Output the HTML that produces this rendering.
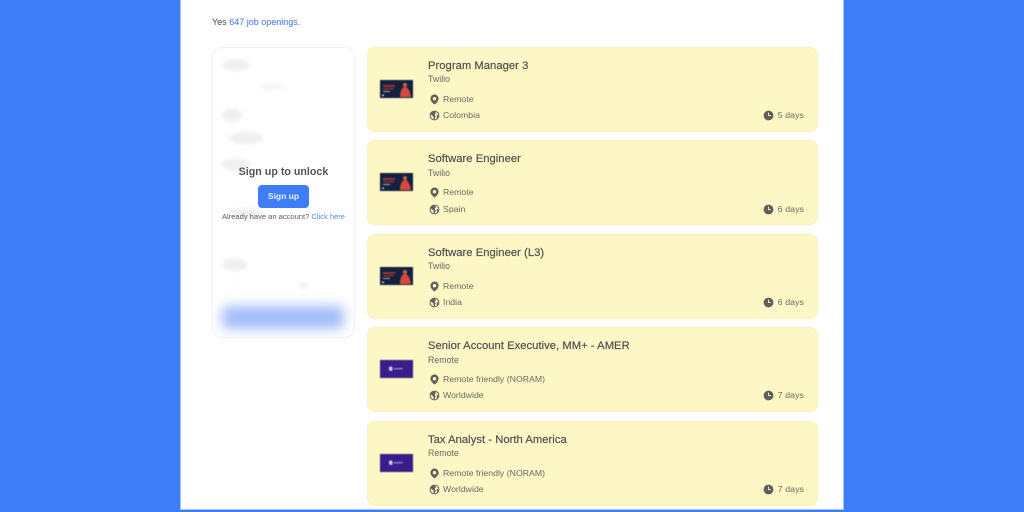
<!DOCTYPE html>
<html><head><meta charset="utf-8">
<style>
html,body{margin:0;padding:0}
body{width:1024px;height:512px;overflow:hidden;background:#3f7cf8;position:relative;font-family:"Liberation Sans",sans-serif;color:#4b4b4b}
.page{position:absolute;left:181px;top:0;width:662px;height:509px;background:#fff;box-shadow:0 0 0 1px #a9c5fb}
.t{position:absolute;white-space:nowrap;filter:blur(.3px)}
.card{position:absolute;left:367px;width:449px;height:83px;background:#fdf7c6;border:1px solid #f9f0bd;border-radius:8px}
.title{left:60px;top:12px;font-size:11.2px;line-height:13px;color:#505050;letter-spacing:.05px;-webkit-text-stroke:.2px #505050}
.co{left:60px;top:26px;font-size:8.8px;color:#686864}
.l1{left:75px;top:46px;font-size:8.7px;color:#686864;letter-spacing:.03px}
.l2{left:75px;top:62px;font-size:8.7px;color:#686864;letter-spacing:.03px}
.d{right:13px;top:62px;font-size:8.7px;color:#686864;letter-spacing:.1px}
.logo{position:absolute;left:12px;top:32px;width:33px;height:18px;filter:blur(.5px)}
.ic{position:absolute;width:11px;height:11px}
.side{position:absolute;left:212px;top:47px;width:141px;height:289px;border:1px solid #f1f1f3;border-radius:10px;background:#fff;overflow:hidden}
.b{position:absolute;background:#efeff1;border-radius:50%;filter:blur(2px)}
</style></head><body>
<div class="page"></div>
<div class="t" style="left:212px;top:17px;font-size:9px;color:#626262;-webkit-text-stroke:.12px">Yes <span style="color:#5a86e0">647 job openings</span>.</div>

<div class="side">
<div class="b" style="left:9px;top:11px;width:28px;height:12px"></div>
<div class="b" style="left:46px;top:37px;width:24px;height:4px"></div>
<div class="b" style="left:9px;top:60px;width:20px;height:14px"></div>
<div class="b" style="left:16px;top:84px;width:34px;height:12px"></div>
<div class="b" style="left:9px;top:110px;width:28px;height:13px"></div>
<div class="b" style="left:16px;top:160px;width:34px;height:10px"></div>
<div class="b" style="left:9px;top:210px;width:25px;height:13px"></div>
<div class="b" style="left:19px;top:236px;width:6px;height:3px"></div>
<div class="b" style="left:86px;top:234px;width:8px;height:7px"></div>
<div style="position:absolute;left:9px;top:258px;width:122px;height:23px;background:#a3bcf9;border-radius:6px;filter:blur(6px)"></div>
</div>

<div class="t" style="left:212px;width:143px;text-align:center;top:166px;font-size:10.7px;font-weight:bold;color:#555">Sign up to unlock</div>
<div style="position:absolute;left:258px;top:185px;width:51px;height:23px;background:#3f7cf8;border-radius:4px"></div>
<div class="t" style="left:258px;width:51px;text-align:center;top:191px;font-size:8.5px;font-weight:bold;color:#eaf1ff">Sign up</div>
<div class="t" style="left:222px;top:212px;font-size:7.55px;color:#5c5c5c">Already have an account? <span style="color:#5a86e0">Click here</span></div>

<svg width="0" height="0" style="position:absolute"><defs>
<symbol id="pin" viewBox="0 0 11 11"><path fill="#5f5f5c" fill-rule="evenodd" d="M5.5.5a4.1 4.1 0 0 0-4.1 4.1c0 2.6 2.9 5.2 4.1 5.9 1.2-.7 4.1-3.3 4.1-5.9A4.1 4.1 0 0 0 5.5.5zm0 2.5a1.7 1.7 0 1 1 0 3.4 1.7 1.7 0 0 1 0-3.4z"/></symbol>
<symbol id="globe" viewBox="0 0 11 11"><circle cx="5.5" cy="5.5" r="4.4" fill="#fdf7c6" stroke="#5f5f5c" stroke-width="1"/><path fill="#5f5f5c" d="M3 2.2 5.8 1.4 7 3.2 5.6 4.6 6.6 6.2 5.8 9.4 4.6 8.6 4.4 6.2 2.4 5 1.6 3.8zM7.6 5.4 9.4 5 9 7.6 8 8.2z"/></symbol>
<symbol id="clock" viewBox="0 0 11 11"><circle cx="5.5" cy="5.5" r="4.9" fill="#5f5f5c"/><path d="M5.5 2.6v3h2.3" fill="none" stroke="#fdf7c6" stroke-width=".9"/></symbol>
<symbol id="tw" viewBox="0 0 33 18"><rect width="33" height="18" fill="#14203f"/><rect x="3" y="5" width="12" height="2" fill="#9c3434"/><rect x="3" y="8" width="11" height="1.5" fill="#8c2f30"/><rect x="3" y="11" width="7" height="1" fill="#aaa"/><rect x="2" y="14.5" width="2" height="1.5" fill="#ccc"/><circle cx="25" cy="5" r="2" fill="#c9604f"/><path d="M20 17c0-6 2-10 5-10s5 4 6 10z" fill="#d8483a"/></symbol>
<symbol id="rm" viewBox="0 0 33 18"><rect width="33" height="18" fill="#3a1d8a"/><rect x="9" y="6.5" width="3.5" height="4.5" rx="1.5" fill="#cfc8f0"/><rect x="13.5" y="8" width="9" height="1.5" fill="#8d7dd2"/></symbol>
</defs></svg>

<div class="card" style="top:47px"><svg class="logo"><use href="#tw"/></svg><div class="t title">Program Manager 3</div><div class="t co">Twilio</div><svg class="ic" style="left:61px;top:46px"><use href="#pin"/></svg><div class="t l1">Remote</div><svg class="ic" style="left:61px;top:62px"><use href="#globe"/></svg><div class="t l2">Colombia</div><svg class="ic" style="left:395px;top:62px"><use href="#clock"/></svg><div class="t d">5 days</div></div>

<div class="card" style="top:140px"><svg class="logo"><use href="#tw"/></svg><div class="t title">Software Engineer</div><div class="t co" style="top:27px">Twilio</div><svg class="ic" style="left:61px;top:46px"><use href="#pin"/></svg><div class="t l1">Remote</div><svg class="ic" style="left:61px;top:63px"><use href="#globe"/></svg><div class="t l2" style="top:63px">Spain</div><svg class="ic" style="left:395px;top:63px"><use href="#clock"/></svg><div class="t d" style="top:63px">6 days</div></div>

<div class="card" style="top:234px"><svg class="logo"><use href="#tw"/></svg><div class="t title">Software Engineer (L3)</div><div class="t co">Twilio</div><svg class="ic" style="left:61px;top:46px"><use href="#pin"/></svg><div class="t l1">Remote</div><svg class="ic" style="left:61px;top:62px"><use href="#globe"/></svg><div class="t l2">India</div><svg class="ic" style="left:395px;top:62px"><use href="#clock"/></svg><div class="t d">6 days</div></div>

<div class="card" style="top:327px"><svg class="logo"><use href="#rm"/></svg><div class="t title">Senior Account Executive, MM+ - AMER</div><div class="t co" style="top:27px">Remote</div><svg class="ic" style="left:61px;top:46px"><use href="#pin"/></svg><div class="t l1">Remote friendly (NORAM)</div><svg class="ic" style="left:61px;top:62px"><use href="#globe"/></svg><div class="t l2">Worldwide</div><svg class="ic" style="left:395px;top:62px"><use href="#clock"/></svg><div class="t d">7 days</div></div>

<div class="card" style="top:421px"><svg class="logo"><use href="#rm"/></svg><div class="t title">Tax Analyst - North America</div><div class="t co">Remote</div><svg class="ic" style="left:61px;top:46px"><use href="#pin"/></svg><div class="t l1">Remote friendly (NORAM)</div><svg class="ic" style="left:61px;top:62px"><use href="#globe"/></svg><div class="t l2">Worldwide</div><svg class="ic" style="left:395px;top:62px"><use href="#clock"/></svg><div class="t d">7 days</div></div>
</body></html>
